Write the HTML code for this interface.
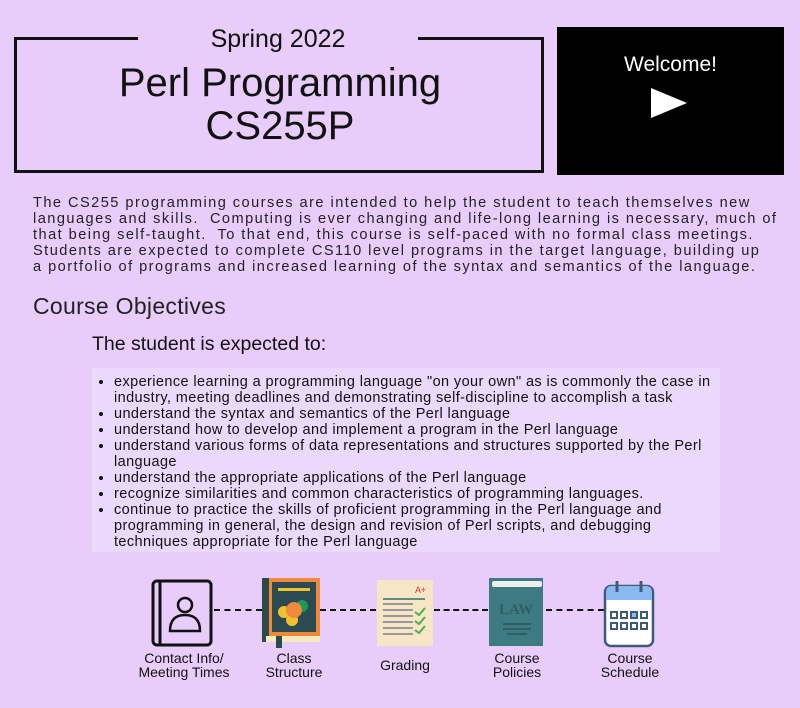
<!DOCTYPE html>
<html><head><meta charset="utf-8"><style>
body{margin:0;width:800px;height:708px;background:#e8cdfa;font-family:"Liberation Sans",sans-serif;position:relative;overflow:hidden;color:#111}
.a{position:absolute}
.ln{position:absolute;background:#111}
.p{left:33px;top:195px;font-size:14.6px;line-height:16px;letter-spacing:1.45px;white-space:nowrap;color:#222}
.lst{left:92px;top:368px;width:628px;height:184px;background:#ebd9fb}
.lst ul{margin:0;padding:0 0 0 22px;font-size:14.5px;line-height:16px;padding-top:6px;color:#111;white-space:nowrap;letter-spacing:0.4px}
.lbl{font-size:14px;line-height:14px;text-align:center;color:#111;width:120px}
.dash{position:absolute;top:609px;height:0;border-top:2px dashed #111}
</style></head><body>
<div class="ln" style="left:14px;top:37px;width:124px;height:3px"></div>
<div class="ln" style="left:418px;top:37px;width:126px;height:3px"></div>
<div class="ln" style="left:14px;top:37px;width:3px;height:136px"></div>
<div class="ln" style="left:541px;top:37px;width:3px;height:136px"></div>
<div class="ln" style="left:14px;top:170px;width:530px;height:3px"></div>
<div class="a" style="left:140px;top:25px;width:276px;text-align:center;font-size:25px">Spring 2022</div>
<div class="a" style="left:60px;top:62px;width:440px;text-align:center;font-size:40px;line-height:43px">Perl Programming<br>CS255P</div>
<div class="a" style="left:557px;top:27px;width:227px;height:148px;background:#000">
<div style="color:#fff;text-align:center;font-size:21px;margin-top:26px">Welcome!</div>
<svg width="40" height="34" style="position:absolute;left:92px;top:59px"><polygon points="2,2 38,17 2,32" fill="#fff"/></svg>
</div>
<div class="a p">The CS255 programming courses are intended to help the student to teach themselves new<br>languages and skills.&nbsp; Computing is ever changing and life-long learning is necessary, much of<br>that being self-taught.&nbsp; To that end, this course is self-paced with no formal class meetings.<br>Students are expected to complete CS110 level programs in the target language, building up<br>a portfolio of programs and increased learning of the syntax and semantics of the language.</div>
<div class="a" style="left:33px;top:293px;font-size:23px;color:#222;letter-spacing:0.3px">Course Objectives</div>
<div class="a" style="left:92px;top:333px;font-size:19.5px">The student is expected to:</div>
<div class="a lst"><ul>
<li>experience learning a programming language "on your own" as is commonly the case in<br>industry, meeting deadlines and demonstrating self-discipline to accomplish a task</li>
<li>understand the syntax and semantics of the Perl language</li>
<li>understand how to develop and implement a program in the Perl language</li>
<li>understand various forms of data representations and structures supported by the Perl<br>language</li>
<li>understand the appropriate applications of the Perl language</li>
<li>recognize similarities and common characteristics of programming languages.</li>
<li>continue to practice the skills of proficient programming in the Perl language and<br>programming in general, the design and revision of Perl scripts, and debugging<br>techniques appropriate for the Perl language</li>
</ul></div>
<div class="dash" style="left:214px;width:48px"></div>
<div class="dash" style="left:320px;width:56px"></div>
<div class="dash" style="left:434px;width:54px"></div>
<div class="dash" style="left:546px;width:58px"></div>
<svg class="a" style="left:150px;top:579px" width="64" height="68"><rect x="3" y="2" width="58" height="64" rx="4" fill="none" stroke="#111" stroke-width="3"/><line x1="10" y1="2" x2="10" y2="66" stroke="#111" stroke-width="3"/><circle cx="35" cy="26" r="7" fill="none" stroke="#111" stroke-width="2.5"/><path d="M20 52 Q20 36 35 36 Q50 36 50 52 Z" fill="none" stroke="#111" stroke-width="2.5"/></svg>
<svg class="a" style="left:262px;top:578px" width="58" height="70"><rect x="0" y="0" width="58" height="64" fill="#f08a3a"/><rect x="0" y="0" width="7" height="64" fill="#2b4a4a"/><rect x="10" y="4" width="44" height="50" fill="#2c4a52"/><rect x="16" y="10" width="32" height="3" fill="#f2c12e"/><circle cx="22" cy="34" r="6" fill="#f2c12e"/><circle cx="40" cy="28" r="6" fill="#1a9b5a"/><circle cx="30" cy="42" r="6" fill="#f2c12e"/><circle cx="32" cy="32" r="8" fill="#f08a3a"/><rect x="4" y="58" width="54" height="6" fill="#f5eac0"/><rect x="14" y="58" width="6" height="12" fill="#2b4a4a"/></svg>
<svg class="a" style="left:377px;top:580px" width="56" height="68"><rect width="56" height="66" fill="#f6e6c6"/><g stroke="#999" stroke-width="2"><line x1="6" y1="24" x2="36" y2="24"/><line x1="6" y1="30" x2="36" y2="30"/><line x1="6" y1="36" x2="36" y2="36"/><line x1="6" y1="42" x2="36" y2="42"/><line x1="6" y1="48" x2="36" y2="48"/><line x1="6" y1="54" x2="36" y2="54"/></g><line x1="6" y1="19" x2="48" y2="19" stroke="#2f6f6f" stroke-width="1.5"/><text x="38" y="13" font-size="9" fill="#d33">A+</text><path d="M38 32l4 3 6-7M38 41l4 3 6-7M38 50l4 3 6-7" stroke="#4caf50" stroke-width="2" fill="none"/></svg>
<svg class="a" style="left:489px;top:578px" width="56" height="70"><rect x="0" y="0" width="54" height="68" fill="#3e7a82"/><rect x="3" y="3" width="50" height="6" rx="2" fill="#eee"/><text x="10" y="36" font-family="Liberation Serif" font-size="15" font-weight="bold" fill="#2e5f66">LAW</text><g stroke="#2e5f66" stroke-width="2"><line x1="14" y1="46" x2="42" y2="46"/><line x1="14" y1="51" x2="42" y2="51"/><line x1="18" y1="56" x2="38" y2="56"/></g></svg>
<svg class="a" style="left:603px;top:580px" width="52" height="68"><rect x="2" y="6" width="48" height="60" rx="6" fill="#fff" stroke="#3e5a78" stroke-width="2.5"/><path d="M3 12 Q3 6 9 6 H43 Q49 6 49 12 V20 H3Z" fill="#8ab8f0"/><line x1="14" y1="1" x2="14" y2="12" stroke="#3e5a78" stroke-width="3"/><line x1="38" y1="1" x2="38" y2="12" stroke="#3e5a78" stroke-width="3"/><g fill="none" stroke="#3e5a78" stroke-width="2"><rect x="8" y="32" width="6" height="6"/><rect x="18" y="32" width="6" height="6"/><rect x="28" y="32" width="6" height="6" fill="#8ab8f0"/><rect x="38" y="32" width="6" height="6"/><rect x="8" y="43" width="6" height="6"/><rect x="18" y="43" width="6" height="6"/><rect x="28" y="43" width="6" height="6"/><rect x="38" y="43" width="6" height="6"/></g></svg>
<div class="a lbl" style="left:124px;top:651px">Contact Info/<br>Meeting Times</div>
<div class="a lbl" style="left:234px;top:651px">Class<br>Structure</div>
<div class="a lbl" style="left:345px;top:658px">Grading</div>
<div class="a lbl" style="left:457px;top:651px">Course<br>Policies</div>
<div class="a lbl" style="left:570px;top:651px">Course<br>Schedule</div>
</body></html>
